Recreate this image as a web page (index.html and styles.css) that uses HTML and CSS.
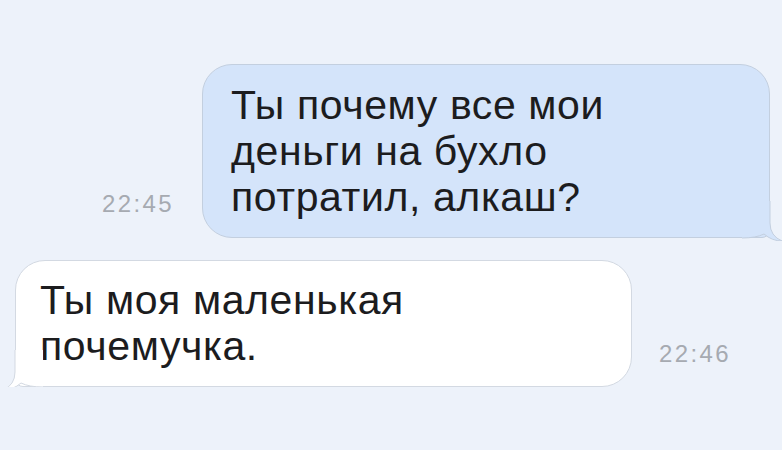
FILE: index.html
```html
<!DOCTYPE html>
<html lang="ru">
<head>
  <meta charset="UTF-8">
  <meta name="viewport" content="width=device-width, initial-scale=1.0">
  <title>Диалог</title>
  <link rel="stylesheet" href="styles.css">
</head>
<body>
  <div class="chat">
    <div class="row row-out">
      <span class="time time-out">22:45</span>
      <div class="bubble bubble-out">
        <p>Ты почему все мои<br>деньги на бухло<br>потратил, алкаш?</p>
        <svg class="tail tail-out" width="40" height="40" viewBox="0 0 40 40">
          <path d="M0 0 H28 V22 Q28 35 40 40 Q30 40 22 33 Q14 37 0 37 Z" fill="#d4e4fa"/>
          <path d="M28 0 V22 Q28 35 40 40 Q30 40 22 33 Q14 37 0 37" fill="none" stroke="#c3cfdf" stroke-width="1"/>
        </svg>
      </div>
    </div>

    <div class="row row-in">
      <div class="bubble bubble-in">
        <p>Ты моя маленькая<br>почемучка.</p>
        <svg class="tail tail-in" width="40" height="40" viewBox="0 0 40 40">
          <path d="M40 0 H12 V22 Q12 35 0 40 Q10 40 18 33 Q26 37 40 37 Z" fill="#ffffff"/>
          <path d="M12 0 V22 Q12 35 0 40 Q10 40 18 33 Q26 37 40 37" fill="none" stroke="#d3d9e2" stroke-width="1"/>
        </svg>
      </div>
      <span class="time time-in">22:46</span>
    </div>
  </div>
</body>
</html>
```

FILE: styles.css
```css
* {
  margin: 0;
  padding: 0;
  box-sizing: border-box;
}
body {
  background: #edf2fa;
  font-family: 'Liberation Sans', Arial, sans-serif;
  color: #1c1c1e;
}
.chat {
  display: flex;
  flex-direction: column;
  gap: 22px;
  padding: 64px 12px 0 15px;
}
.row {
  display: flex;
  align-items: flex-end;
}
.row-out {
  justify-content: flex-end;
  gap: 28px;
}
.row-in {
  gap: 27px;
}
.bubble {
  position: relative;
  border-radius: 30px;
}
.bubble p {
  font-size: 41px;
  line-height: 46px;
  letter-spacing: 0.6px;
}
.bubble-out {
  width: 568px;
  height: 174px;
  padding: 17px 10px 0 28px;
  background: #d4e4fa;
  border: 1px solid #c3cfdf;
  border-bottom-right-radius: 8px;
}
.bubble-in {
  width: 617px;
  height: 127px;
  padding: 16px 10px 0 24px;
  background: #ffffff;
  border: 1px solid #d3d9e2;
  border-bottom-left-radius: 8px;
}
.tail {
  position: absolute;
  bottom: -4px;
}
.tail-out {
  right: -13px;
}
.tail-in {
  left: -13px;
}
.time {
  font-size: 24px;
  color: #a6aab1;
  letter-spacing: 2.4px;
}
.time-out {
  margin-bottom: 20px;
}
.time-in {
  margin-bottom: 19px;
}
```
